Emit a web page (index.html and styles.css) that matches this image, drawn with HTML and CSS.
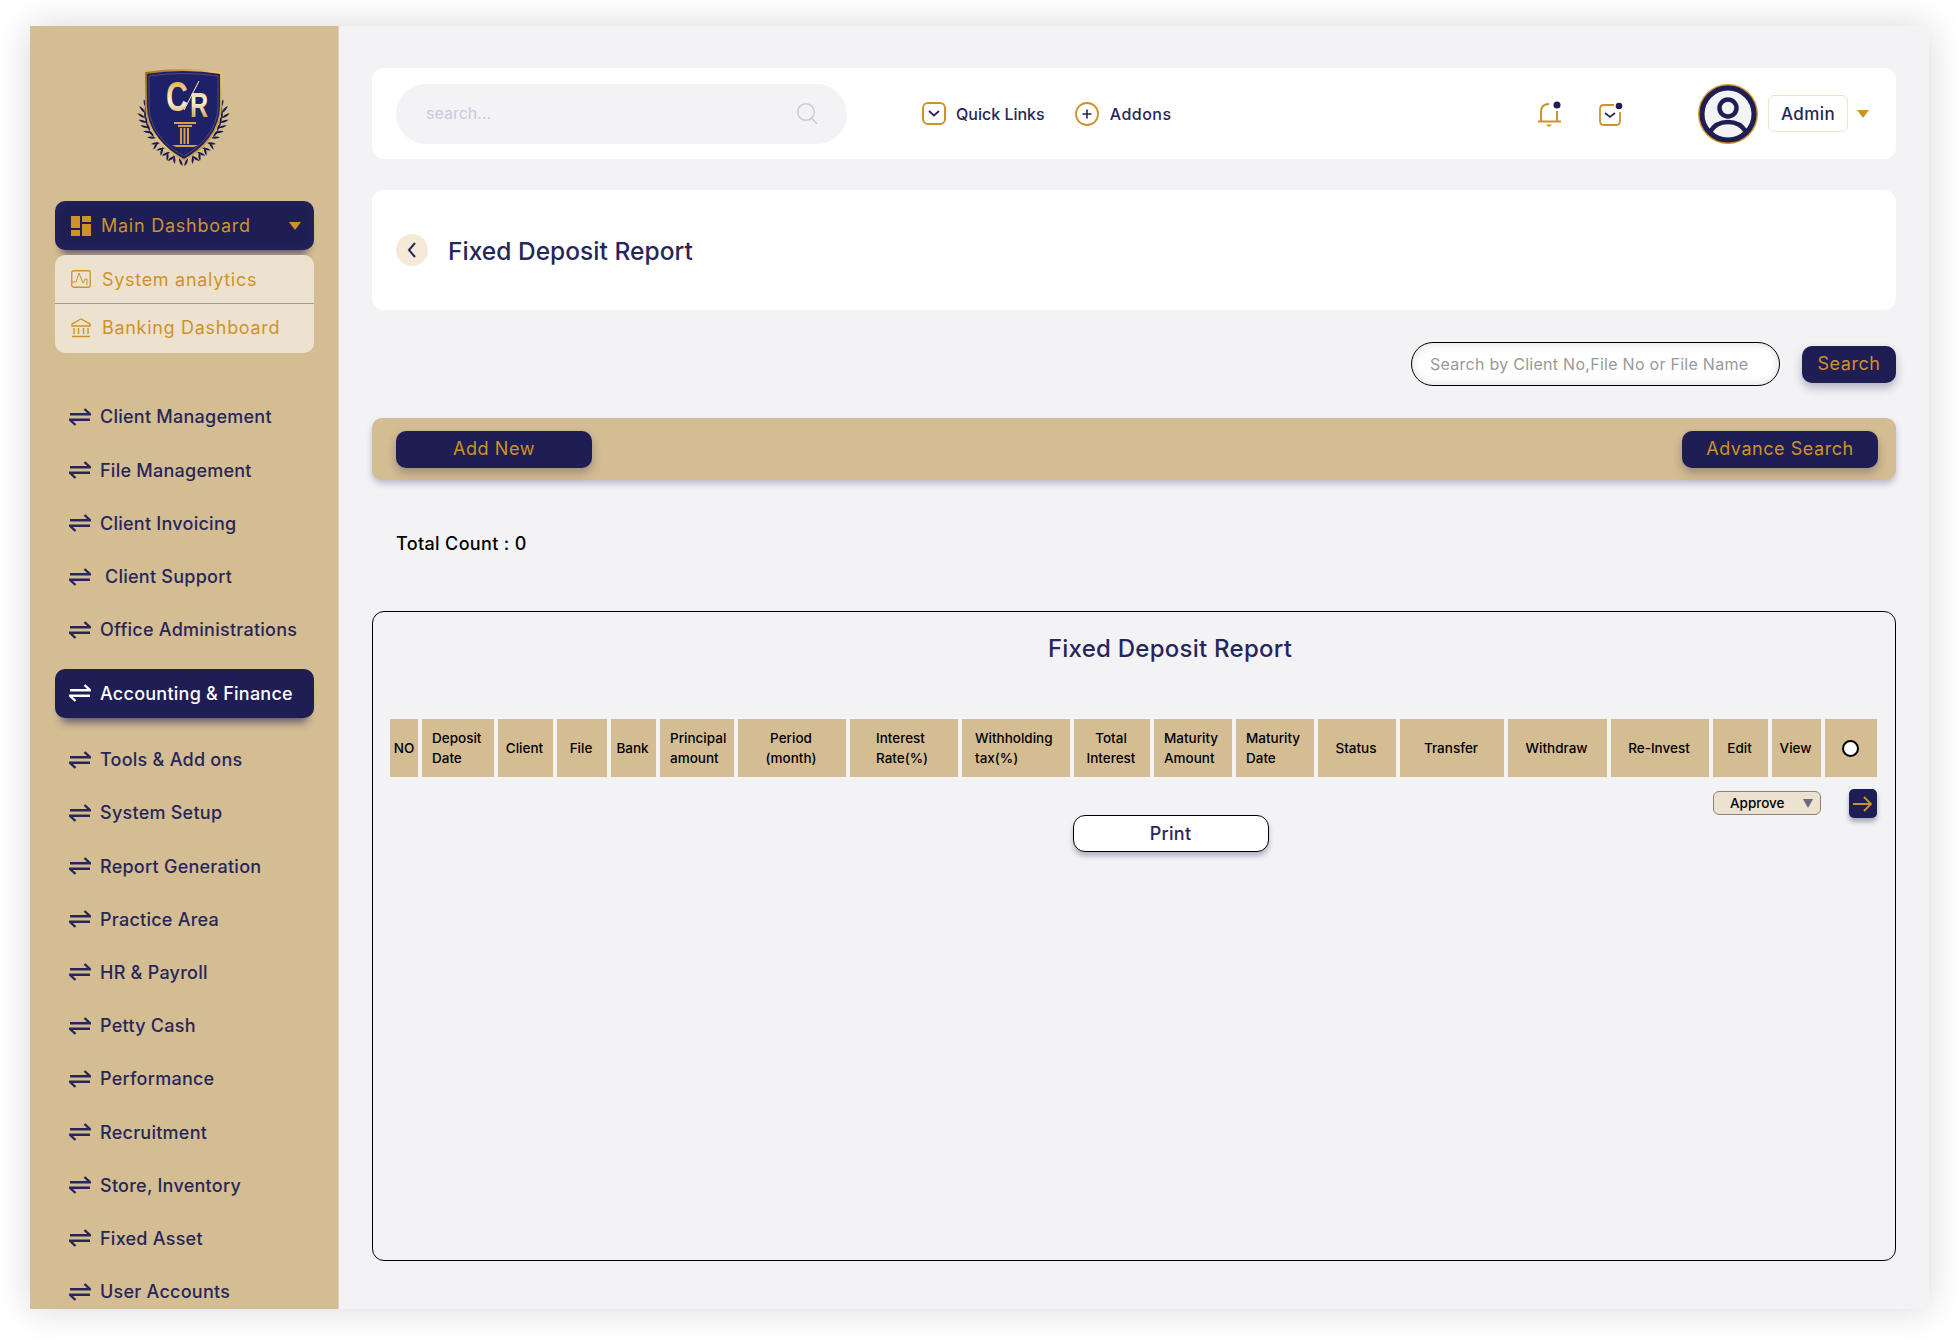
FILE: index.html
```html
<!DOCTYPE html>
<html lang="en">
<head>
<meta charset="utf-8">
<title>Fixed Deposit Report</title>
<link rel="stylesheet" href="styles.css">
</head>
<body>
<svg class="defs" width="0" height="0">
  <defs>
    <symbol id="swap" viewBox="0 0 22 18"><path d="M1 6.200H21L15.500 1M21 11.800H1L6.500 17" fill="none" stroke="currentColor" stroke-width="2.400"/></symbol>
    <linearGradient id="gold" x1="0" y1="0" x2="0" y2="1"><stop offset="0" stop-color="#d8961f"/><stop offset=".55" stop-color="#fdf3da"/><stop offset="1" stop-color="#c98a1c"/></linearGradient>
    <linearGradient id="rim" x1="0" y1="0" x2="1" y2="1"><stop offset="0" stop-color="#a8681c"/><stop offset=".5" stop-color="#f3c878"/><stop offset="1" stop-color="#b47a20"/></linearGradient>
    <path id="leaf" d="M0 0Q4.500-2.400 9-.6Q4.500 2 0 0Z" fill="#1a1c4d"/>
    <g id="laurel">
      <use href="#leaf" transform="translate(26 58) rotate(-100)"/><use href="#leaf" transform="translate(25 63) rotate(-125)"/><use href="#leaf" transform="translate(25 68) rotate(-145)"/><use href="#leaf" transform="translate(27 73) rotate(-155)"/><use href="#leaf" transform="translate(29 78) rotate(-160)"/><use href="#leaf" transform="translate(32 83) rotate(-165)"/><use href="#leaf" transform="translate(36 88) rotate(-172)"/><use href="#leaf" transform="translate(40 93) rotate(178)"/><use href="#leaf" transform="translate(45 98) rotate(170)"/><use href="#leaf" transform="translate(50 102) rotate(160)"/><use href="#leaf" transform="translate(55 106) rotate(150)"/>
      <use href="#leaf" transform="translate(25 62) rotate(-75)"/><use href="#leaf" transform="translate(25 69) rotate(-85)"/><use href="#leaf" transform="translate(27 75) rotate(-95)"/><use href="#leaf" transform="translate(30 81) rotate(-110)"/><use href="#leaf" transform="translate(34 87) rotate(-125)"/><use href="#leaf" transform="translate(38 92) rotate(125)"/><use href="#leaf" transform="translate(43 97) rotate(110)"/><use href="#leaf" transform="translate(48 102) rotate(100)"/><use href="#leaf" transform="translate(54 105) rotate(90)"/><use href="#leaf" transform="translate(59 108) rotate(70)"/>
    </g>
  </defs>
</svg>
<div class="frame">
  <aside class="sidebar">
    <div class="logo">
      <svg width="130" height="130" viewBox="0 0 130 130">
        <use href="#laurel"/>
        <use href="#laurel" transform="translate(127 0) scale(-1 1)"/>
        <path d="M26 23Q63 17 101 23V55C101 82 82 100 64 110C45 100 26 82 26 55Z" fill="#1f2168" stroke="url(#rim)" stroke-width="1.800"/>
        <path d="M29 26Q63 21 98 26V55C98 80 80 97 64 106C47 97 29 80 29 55Z" fill="none" stroke="#8f7350" stroke-width=".5"/>
        <text class="logo-cr" transform="translate(46 61) scale(.72 1)" fill="url(#gold)">C<tspan class="logo-r" dx="3" dy="6">R</tspan></text>
        <path d="M64 60 79 31" stroke="#fdf3da" stroke-width="1"/>
        <path d="M54 72H76V74H54ZM58 75H72V77H58ZM60 78H62V94H60ZM63.500 78H65.500V94H63.500ZM67 78H69V94H67ZM52 95H78L74 97H56Z" fill="#d8a042"/>
      </svg>
    </div>
    <div class="nav-main">
      <svg class="nav-main-icon" width="20" height="20" viewBox="0 0 20 20"><path d="M0 0H9V12H0ZM11 0H20V6H11ZM11 8H20V20H11ZM0 14H9V20H0Z" fill="#cf9229"/></svg>
      <span class="nav-main-label">Main Dashboard</span>
      <span class="caret"></span>
    </div>
    <div class="submenu">
      <div class="sub-item">
        <svg width="20" height="18" viewBox="0 0 20 18"><rect x=".75" y=".75" width="18.500" height="16.500" rx="2" fill="none" stroke="#cf9229" stroke-width="1.300"/><path d="M1 12H5L8 3 12 13 14 9H16V15" fill="none" stroke="#cf9229" stroke-width="1"/></svg>
        <span>System analytics</span>
      </div>
      <div class="sub-item sub-bank">
        <svg width="20" height="20" viewBox="0 0 20 20"><path d="M10 1 1 6V8H19V6Z M3 10V16M7.500 10V16M12.500 10V16M17 10V16M1 18.500H19" fill="none" stroke="#cf9229" stroke-width="1.400"/></svg>
        <span>Banking Dashboard</span>
      </div>
    </div>
    <nav class="nav-list">
      <a class="nav-item"><svg class="swap"><use href="#swap"/></svg><span>Client Management</span></a>
      <a class="nav-item"><svg class="swap"><use href="#swap"/></svg><span>File Management</span></a>
      <a class="nav-item"><svg class="swap"><use href="#swap"/></svg><span>Client Invoicing</span></a>
      <a class="nav-item nav-indent"><svg class="swap"><use href="#swap"/></svg><span>Client Support</span></a>
      <a class="nav-item"><svg class="swap"><use href="#swap"/></svg><span>Office Administrations</span></a>
      <a class="nav-item nav-active"><svg class="swap"><use href="#swap"/></svg><span>Accounting &amp; Finance</span></a>
      <a class="nav-item"><svg class="swap"><use href="#swap"/></svg><span>Tools &amp; Add ons</span></a>
      <a class="nav-item"><svg class="swap"><use href="#swap"/></svg><span>System Setup</span></a>
      <a class="nav-item"><svg class="swap"><use href="#swap"/></svg><span>Report Generation</span></a>
      <a class="nav-item"><svg class="swap"><use href="#swap"/></svg><span>Practice Area</span></a>
      <a class="nav-item"><svg class="swap"><use href="#swap"/></svg><span>HR &amp; Payroll</span></a>
      <a class="nav-item"><svg class="swap"><use href="#swap"/></svg><span>Petty Cash</span></a>
      <a class="nav-item"><svg class="swap"><use href="#swap"/></svg><span>Performance</span></a>
      <a class="nav-item"><svg class="swap"><use href="#swap"/></svg><span>Recruitment</span></a>
      <a class="nav-item"><svg class="swap"><use href="#swap"/></svg><span>Store, Inventory</span></a>
      <a class="nav-item"><svg class="swap"><use href="#swap"/></svg><span>Fixed Asset</span></a>
      <a class="nav-item"><svg class="swap"><use href="#swap"/></svg><span>User Accounts</span></a>
    </nav>
  </aside>
  <main class="main">
    <header class="topbar">
      <div class="top-search">
        <span>search...</span>
        <svg width="22" height="24" viewBox="0 0 22 24"><circle cx="10" cy="10" r="8.300" fill="none" stroke="#c9c9dc" stroke-width="1.500"/><path d="M16 16.500 21 22" stroke="#c9c9dc" stroke-width="1.500"/></svg>
      </div>
      <div class="top-link top-quick">
        <svg width="24" height="23" viewBox="0 0 24 23"><rect x="1" y="1" width="22" height="21" rx="5" fill="none" stroke="#cf9229" stroke-width="2"/><path d="M7 9 12 13.500 17 9" fill="none" stroke="#27265a" stroke-width="1.800"/></svg>
        <span>Quick Links</span>
      </div>
      <div class="top-link top-addons">
        <svg width="24" height="24" viewBox="0 0 24 24"><circle cx="12" cy="12" r="11" fill="none" stroke="#cf9229" stroke-width="1.800"/><path d="M12 7.500V16.500M7.500 12H16.500" stroke="#27265a" stroke-width="1.600"/></svg>
        <span>Addons</span>
      </div>
      <svg class="top-bell" width="25" height="26" viewBox="0 0 25 26"><path d="M4 20V11C4 6 7 3 12 3M1 20.500H24M20 10V20" fill="none" stroke="#cf9229" stroke-width="2"/><path d="M9 23.500H15L13 25.500H11Z" fill="#cf9229"/><circle cx="20" cy="4" r="3.500" fill="#1e1d54"/></svg>
      <svg class="top-mail" width="24" height="24" viewBox="0 0 24 24"><path d="M15 3H5Q1 3 1 7V19Q1 23 5 23H17Q21 23 21 19V10" fill="none" stroke="#cf9229" stroke-width="1.800"/><path d="M6 11 11 15 16 11" fill="none" stroke="#27265a" stroke-width="1.700"/><circle cx="20" cy="4" r="3.300" fill="#1e1d54"/></svg>
      <svg class="top-avatar" width="60" height="60" viewBox="0 0 60 60"><circle cx="30" cy="30" r="30" fill="#cf9229"/><circle cx="30" cy="30" r="26" fill="#f3f3f6" stroke="#1e1d54" stroke-width="5"/><circle cx="30" cy="24" r="8.500" fill="none" stroke="#1e1d54" stroke-width="4.500"/><path d="M12 48C16 41 22 38 30 38S44 41 48 48" fill="none" stroke="#1e1d54" stroke-width="4.500"/></svg>
      <div class="top-admin">Admin</div>
      <span class="caret top-caret"></span>
    </header>
    <section class="title-card">
      <span class="back"><svg width="10" height="16" viewBox="0 0 10 16"><path d="M8 1 2 8 8 15" fill="none" stroke="#27265a" stroke-width="2"/></svg></span>
      <h1>Fixed Deposit Report</h1>
    </section>
    <div class="search-row">
      <div class="search-input">Search by Client No,File No or File Name</div>
      <button class="btn btn-search">Search</button>
    </div>
    <div class="action-bar">
      <button class="btn btn-wide">Add New</button>
      <button class="btn btn-wide">Advance Search</button>
    </div>
    <p class="total">Total Count : 0</p>
    <section class="report">
      <h2>Fixed Deposit Report</h2>
      <div class="thead">
        <div>NO</div>
        <div class="left">Deposit<br>Date</div>
        <div>Client</div>
        <div>File</div>
        <div>Bank</div>
        <div class="left">Principal<br>amount</div>
        <div>Period<br>(month)</div>
        <div class="left l-wide">Interest<br>Rate(%)</div>
        <div class="left l-wide">Withholding<br>tax(%)</div>
        <div>Total<br>Interest</div>
        <div class="left">Maturity<br>Amount</div>
        <div class="left">Maturity<br>Date</div>
        <div>Status</div>
        <div>Transfer</div>
        <div>Withdraw</div>
        <div>Re-Invest</div>
        <div>Edit</div>
        <div>View</div>
        <div><span class="radio"></span></div>
      </div>
      <div class="row-actions">
        <div class="select">Approve<span class="select-caret"></span></div>
        <button class="btn-go"><svg width="20" height="16" viewBox="0 0 20 16"><path d="M0 8H18M11 1 18 8 11 15" fill="none" stroke="#cf9229" stroke-width="1.800"/></svg></button>
      </div>
      <div class="print-row"><button class="btn-print">Print</button></div>
    </section>
  </main>
</div>
</body>
</html>
```
FILE: styles.css
```css
* { box-sizing: border-box; }
html, body { margin: 0; padding: 0; background: #fff; }
body { font-family: "Inter", "Open Sans", sans-serif; color: #27265a; height: 1343px; overflow: hidden; }
.defs { position: absolute; }
.frame { display: flex; width: 1899px; height: 1283px; margin: 26px 0 0 30px; background: #f3f3f6; overflow: hidden; box-shadow: 0 0 34px rgba(0,0,0,.16); }
.sidebar { flex: 0 0 309px; background: #d4bd92; border-right: 1px solid #e4d3b2; padding: 24px 24px 0 25px; }
.logo { height: 130px; margin-left: 65px; }
.logo-cr { font-family: "Liberation Sans", sans-serif; font-weight: 700; font-size: 42px; }
.logo-r { font-size: 35px; }
.nav-main { display: flex; align-items: center; width: 259px; height: 49px; margin-top: 21px; padding: 0 13px 0 16px; background: #1e1d54; border-radius: 10px; box-shadow: 0 11px 9px -7px rgba(30,29,84,.65), inset 0 0 12px rgba(255,255,255,.05); color: #cf9229; font-size: 18px; letter-spacing: .75px; }
.nav-main-label { margin-left: 10px; flex: 1; }
.caret { display: block; width: 0; height: 0; border-left: 6.500px solid transparent; border-right: 6.500px solid transparent; border-top: 8px solid #cf9229; }
.submenu { width: 259px; margin-top: 5px; background: #ece2cf; border-radius: 10px; color: #cf9229; font-size: 18px; letter-spacing: .7px; }
.sub-item { display: flex; align-items: center; gap: 11px; height: 48px; padding-left: 16px; }
.sub-bank { height: 50px; padding-bottom: 2px; border-top: 1px solid #9b9aa2; }
.nav-list { display: flex; flex-direction: column; margin-top: 37.400px; margin-left: -1px; }
.nav-item { display: flex; align-items: center; height: 53.200px; padding-left: 15px; font-size: 18px; letter-spacing: .25px; font-weight: 500; color: #27265a; gap: 9px; flex: none; }
.swap { width: 22px; height: 18px; flex: none; }
.nav-indent { gap: 14px; }
.nav-active { height: 49px; margin: 12.400px 0 15.400px 1px; padding-left: 14px; width: 259px; background: #1e1d54; color: #fff; border-radius: 10px; box-shadow: 0 11px 9px -7px rgba(30,29,84,.65); }
.main { flex: 1; padding: 42px 33px 0; min-width: 0; }
.topbar { display: flex; align-items: center; height: 91px; padding: 0 27px 0 24px; background: #fff; border-radius: 12px; }
.top-search { display: flex; align-items: center; justify-content: space-between; flex: 0 0 451px; height: 60px; padding: 0 29px 0 30px; background: #f3f3f6; border-radius: 30px; color: #c9c9dc; font-size: 16px; }
.top-search span { padding-bottom: 2px; }
.top-link { display: flex; align-items: center; gap: 10px; font-size: 16px; font-weight: 500; letter-spacing: 0; }
.top-quick { margin-left: 75px; }
.top-addons { margin-left: 30px; gap: 11px; letter-spacing: .5px; }
.top-bell { margin-left: auto; }
.top-mail { margin-left: 37px; }
.top-avatar { margin-left: 75px; }
.top-admin { display: flex; align-items: center; justify-content: center; width: 80px; height: 37px; margin-left: 10px; border: 1px solid #f1e3cb; border-radius: 6px; font-size: 17px; font-weight: 500; letter-spacing: .4px; }
.top-caret { margin-left: 9px; border-left-width: 6px; border-right-width: 6px; }
.title-card { display: flex; align-items: center; height: 120px; margin-top: 31px; padding: 0 24px; background: #fff; border-radius: 12px; }
.back { display: flex; align-items: center; justify-content: center; width: 32px; height: 32px; border-radius: 50%; background: #f5e9d8; }
h1 { margin: 2px 0 0 20px; font-size: 24.500px; font-weight: 500; letter-spacing: .03px; color: #27265a; }
.search-row { display: flex; justify-content: flex-end; align-items: center; gap: 22px; margin-top: 32px; height: 44px; }
.search-input { display: flex; align-items: center; width: 369px; height: 44px; padding-left: 18px; background: #fff; border: 1px solid #000; border-radius: 22px; box-shadow: inset 0 0 10px rgba(0,0,0,.14); color: #999; font-size: 16px; letter-spacing: .27px; white-space: nowrap; }
.btn { font-family: inherit; border: 0; background: #1e1d54; color: #cf9229; font-size: 18px; border-radius: 10px; box-shadow: 0 5px 10px rgba(30,29,84,.3); letter-spacing: .55px; padding: 0 0 1px; }
.btn-search { width: 94px; height: 37px; }
.action-bar { display: flex; justify-content: space-between; align-items: center; height: 62px; margin-top: 32px; padding: 0 18px 0 24px; background: #d4bd92; border-radius: 10px; box-shadow: 0 4px 6px rgba(30,29,84,.25); }
.btn-wide { width: 196px; height: 37px; }
.total { margin: 53px 0 0 24px; height: 22px; line-height: 22px; font-size: 18px; font-weight: 500; color: #000; letter-spacing: .35px; }
.report { height: 650px; margin-top: 56px; padding: 0 17px; border: 1px solid #000; border-radius: 12px; }
h2 { margin: 0; height: 107px; padding: 20px 0 0 72px; text-align: center; font-size: 24px; line-height: 34px; font-weight: 500; color: #27265a; letter-spacing: .25px; }
.thead { display: grid; grid-template-columns: 28px 72px 55px 50px 45px 74px 108px 108px 108px 76px 78px 78px 78px 104px 99px 98px 55px 49px 52px; column-gap: 4px; height: 58px; }
.thead > div { display: flex; align-items: center; justify-content: center; text-align: center; padding-right: 2px; background: #d4bd92; color: #000; font-size: 13.500px; line-height: 20px; font-weight: 500; }
.thead > div:first-child { padding-right: 0; }
.thead > .left { justify-content: flex-start; text-align: left; padding-left: 10px; padding-right: 0; }
.thead > .l-wide { padding-left: 26px; }
.thead > .l-wide + .l-wide { padding-left: 13px; }
.radio { display: block; width: 17px; height: 17px; background: #fff; border: 2.500px solid #000; border-radius: 50%; }
.row-actions { display: flex; justify-content: flex-end; align-items: flex-start; gap: 28px; height: 26px; margin-top: 12px; padding-right: 1px; }
.select { position: relative; width: 108px; height: 24px; margin-top: 2px; padding-left: 16px; line-height: 22px; background: #ece2cf; border: 1px solid #8a8378; border-radius: 6px; color: #000; font-size: 13.500px; font-weight: 500; }
.select-caret { position: absolute; right: 7px; top: 7px; width: 0; height: 0; border-left: 5px solid transparent; border-right: 5px solid transparent; border-top: 9px solid #6c6a7c; }
.btn-go { display: flex; align-items: center; justify-content: center; flex: none; width: 28px; height: 29px; padding: 0; border: 0; background: #1e1d54; border-radius: 5px; box-shadow: 0 4px 5px rgba(30,29,84,.35); }
.print-row { display: flex; justify-content: center; padding-left: 73px; }
.btn-print { width: 196px; height: 37px; font-family: inherit; font-size: 18px; font-weight: 500; color: #27265a; background: #fff; border: 1.500px solid #000; border-radius: 12px; box-shadow: 0 4px 5px rgba(30,29,84,.3); letter-spacing: .3px; }
```
